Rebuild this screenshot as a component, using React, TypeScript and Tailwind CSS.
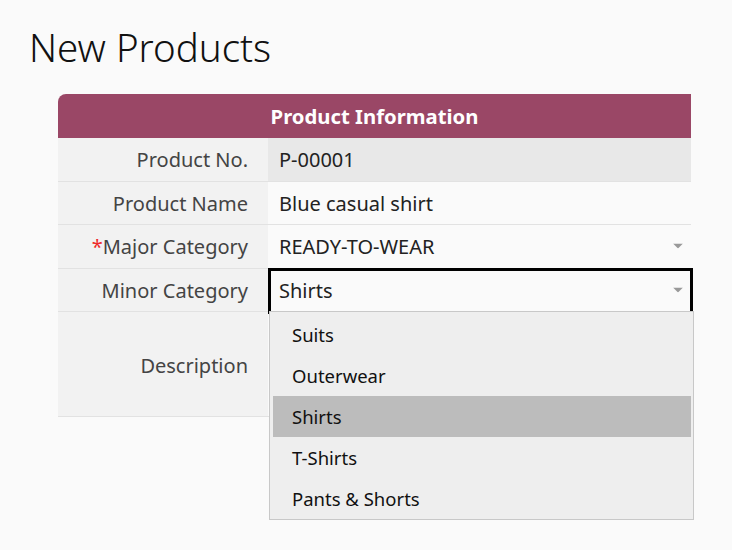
import { useState } from 'react';

const fieldRows = [
  { label: 'Product No.', value: 'P-00001', readOnly: true },
  { label: 'Product Name', value: 'Blue casual shirt' },
  { label: 'Major Category', value: 'READY-TO-WEAR', required: true, select: true },
];

const minorOptions = ['Suits', 'Outerwear', 'Shirts', 'T-Shirts', 'Pants & Shorts'];

function Caret() {
  return (
    <svg width="10" height="5" viewBox="0 0 10 5" className="absolute right-[8px] top-1/2 -translate-y-1/2">
      <path d="M0 0 L10 0 L5 5 Z" fill="#999" />
    </svg>
  );
}

export default function App() {
  const [minor, setMinor] = useState('Shirts');

  return (
    <div className="min-h-[550px] bg-[#fafafa] pt-[20px] pl-[29px] font-['Noto_Sans',sans-serif]">
      <h1 className="text-[38.5px] leading-[54px] font-light text-[#111]">New Products</h1>

      {/* Form table */}
      <div className="mt-[20px] ml-[29px] w-[633px]">
        <div className="h-[44px] flex items-center justify-center rounded-tl-[8px] bg-[#9a4766] text-[20.3px] font-bold text-white">
          Product Information
        </div>

        {fieldRows.map(row => (
          <div key={row.label} className="flex h-[43.5px] border-b border-[#e2e2e2]">
            <div className="w-[210px] shrink-0 flex items-center justify-end pr-[20px] pt-[2px] bg-[#f2f2f2] text-[20px] text-[#444]">
              {row.required && <span className="text-[#ee2a2a]">*</span>}
              {row.label}
            </div>
            <div
              className={`relative flex-1 flex items-center pl-[11px] pt-[2px] text-[20px] text-[#222] ${
                row.readOnly ? 'bg-[#e8e8e8]' : 'bg-[#fafafa]'
              }`}
            >
              {row.value}
              {row.select && <Caret />}
            </div>
          </div>
        ))}

        {/* Minor Category (open) */}
        <div className="flex h-[43.5px] border-b border-[#e2e2e2]">
          <div className="w-[210px] shrink-0 flex items-center justify-end pr-[20px] pt-[2px] bg-[#f2f2f2] text-[20px] text-[#444]">
            Minor Category
          </div>
          <div className="relative flex-1 flex items-center pl-[11px] pt-[2px] bg-[#fafafa] text-[20px] text-[#222]">
            <div className="absolute -top-[0.5px] left-0 -right-[2px] -bottom-[3px] border-[3px] border-black" />
            {minor}
            <Caret />
            <div className="absolute top-full left-[1px] w-[425px] z-10 border border-[#c8c8c8] bg-[#eeeeee] pt-[2px] pl-[3px] pr-[2px]">
              {minorOptions.map(opt => (
                <div
                  key={opt}
                  onClick={() => setMinor(opt)}
                  className={`h-[41px] flex items-center pl-[19px] text-[18.5px] text-[#111] ${
                    opt === minor ? 'bg-[#bcbcbc]' : ''
                  }`}
                >
                  {opt}
                </div>
              ))}
            </div>
          </div>
        </div>

        <div className="flex h-[105px] border-b border-[#e2e2e2]">
          <div className="w-[210px] shrink-0 flex items-center justify-end pr-[20px] pt-[3px] bg-[#f2f2f2] text-[20px] text-[#444]">
            Description
          </div>
          <div className="flex-1 bg-[#fafafa]" />
        </div>
      </div>
    </div>
  );
}
